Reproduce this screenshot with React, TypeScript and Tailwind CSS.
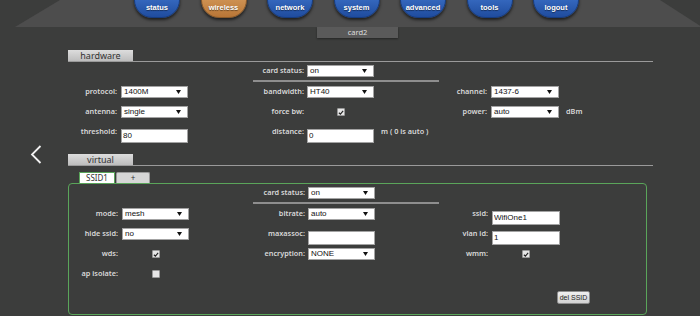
import type { ReactNode } from "react";

const navItems = ["status", "wireless", "network", "system", "advanced", "tools", "logout"];

function Caret() {
  return (
    <svg width="5" height="4" viewBox="0 0 5 4" className="shrink-0">
      <polygon points="0,0 5,0 2.5,4" fill="#111" />
    </svg>
  );
}

function Select({ value }: { value: string }) {
  return (
    <div className="flex h-[12px] w-full items-center justify-between border border-[#a3a3a3] bg-white pl-[2px] pr-[6px] font-['Liberation_Sans',sans-serif] text-[8px] leading-none text-[#111]">
      <span>{value}</span>
      <Caret />
    </div>
  );
}

function TextInput({ value = "" }: { value?: string }) {
  return (
    <input
      readOnly
      value={value}
      className="h-[14px] w-full border border-[#a3a3a3] bg-white px-[1px] font-['Liberation_Sans',sans-serif] text-[8px] leading-none text-[#111] outline-none"
    />
  );
}

function Check({ checked = false }: { checked?: boolean }) {
  return (
    <div className="mx-auto flex h-[8px] w-[8px] items-center justify-center rounded-[1px] border border-[#9a9a9a] bg-[#e6e6e6]">
      {checked && (
        <svg width="7" height="7" viewBox="0 0 7 7">
          <path d="M1 3.8 L2.8 5.5 L6 1.5" fill="none" stroke="#222" strokeWidth="1.3" />
        </svg>
      )}
    </div>
  );
}

function Label({ className, children }: { className: string; children: ReactNode }) {
  return (
    <span className={`${className} shrink-0 text-right text-[7.3px] font-semibold leading-none text-[#d8d8d8]`}>
      {children}
    </span>
  );
}

// column 1: 120px, column 2: 186px, column 3: 185px
function Col1({ label, children }: { label?: string; children?: ReactNode }) {
  return (
    <div className="flex w-[120px] shrink-0 items-center">
      <Label className="w-[49px]">{label}</Label>
      <div className="ml-[4px] w-[67px]">{children}</div>
    </div>
  );
}

function Col2({ label, children }: { label?: string; children?: ReactNode }) {
  return (
    <div className="flex w-[186px] shrink-0 items-center">
      <Label className="w-[116px]">{label}</Label>
      <div className="ml-[3px] w-[67px]">{children}</div>
    </div>
  );
}

function Col3({ label, children }: { label?: string; children?: ReactNode }) {
  return (
    <div className="flex w-[185px] shrink-0 items-center">
      <Label className="w-[113px]">{label}</Label>
      <div className="ml-[4px] w-[68px]">{children}</div>
    </div>
  );
}

function Row({ children, className = "h-[20px]" }: { children: ReactNode; className?: string }) {
  return <div className={`flex items-center ${className}`}>{children}</div>;
}

function SectionTab({ title }: { title: string }) {
  return (
    <div className="flex border-b border-[#9a9a9a]">
      <div className="flex h-[11px] w-[65px] items-center justify-center bg-gradient-to-b from-[#dddddd] to-[#bdbdbd] text-[9px] leading-none text-[#333]">
        {title}
      </div>
    </div>
  );
}

function Divider() {
  return <div className="ml-[185px] h-[2px] w-[186px] bg-[#8e8e8e]" />;
}

export default function App() {
  return (
    <div className="relative h-[316px] w-[700px] overflow-hidden bg-[#3c3d3c] font-['Noto_Sans',sans-serif]">
      <header className="relative h-[27px]">
        <div className="absolute inset-0 bg-[#4d4d4d] [clip-path:polygon(60px_0,660px_0,702px_27px,15px_27px)]" />
        <nav className="relative flex items-start gap-[20.5px] pl-[134px]">
          {navItems.map((item) => (
            <div
              key={item}
              className={
                item === "wireless"
                  ? "-mt-[18px] flex h-[36px] w-[46px] items-end justify-center rounded-[20px] border border-[#8a5a2a] bg-gradient-to-b from-[#e2ab6c] to-[#b87636] pb-[6px] shadow-[0_2px_3px_rgba(0,0,0,0.6)]"
                  : "-mt-[18px] flex h-[36px] w-[46px] items-end justify-center rounded-[20px] border border-[#163c80] bg-gradient-to-b from-[#4a82dc] to-[#1f4c9e] pb-[6px] shadow-[0_2px_3px_rgba(0,0,0,0.6)]"
              }
            >
              <span className="font-['Liberation_Sans',sans-serif] text-[7.5px] font-bold leading-none text-white [text-shadow:0_1px_1px_rgba(0,0,0,0.5)]">
                {item}
              </span>
            </div>
          ))}
        </nav>
      </header>

      <div className="ml-[317px] flex h-[11px] w-[81px] items-center justify-center bg-[#5a5a5a] pt-[1px] text-[7.5px] leading-none text-[#dedede] shadow-[0_1px_2px_rgba(0,0,0,0.4)]">
        card2
      </div>

      <svg className="absolute left-[30px] top-[145px]" width="12" height="19" viewBox="0 0 12 19">
        <polyline points="10.5,1 2,9.5 10.5,18" fill="none" stroke="#f2f2f2" strokeWidth="1.8" />
      </svg>

      <main className="ml-[68px] mt-[12px] w-[585px]">
        <SectionTab title="hardware" />
        <Row className="h-[18px]">
          <div className="w-[120px]" />
          <Col2 label="card status:">
            <Select value="on" />
          </Col2>
        </Row>
        <Divider />
        <Row>
          <Col1 label="protocol:">
            <Select value="1400M" />
          </Col1>
          <Col2 label="bandwidth:">
            <Select value="HT40" />
          </Col2>
          <Col3 label="channel:">
            <Select value="1437-6" />
          </Col3>
        </Row>
        <Row>
          <Col1 label="antenna:">
            <Select value="single" />
          </Col1>
          <Col2 label="force bw:">
            <Check checked />
          </Col2>
          <Col3 label="power:">
            <Select value="auto" />
          </Col3>
          <span className="ml-[7px] text-[7.3px] font-semibold leading-none text-[#d8d8d8]">dBm</span>
        </Row>
        <Row>
          <Col1 label="threshold:">
            <TextInput value="80" />
          </Col1>
          <Col2 label="distance:">
            <TextInput value="0" />
          </Col2>
          <span className="ml-[7px] text-[7.3px] font-semibold leading-none text-[#d8d8d8]">m ( 0 is auto )</span>
        </Row>

        <div className="mt-[12px]">
          <SectionTab title="virtual" />
        </div>
        <div className="ml-[11px] mt-[6px] flex items-end">
          <div className="flex h-[11px] w-[36px] items-center justify-center border-x border-t border-[#5aa55a] bg-white text-[8px] leading-none text-[#333]">
            SSID1
          </div>
          <div className="ml-[1px] flex h-[11px] w-[34px] items-center justify-center rounded-t-[2px] border-x border-t border-[#9a9a9a] bg-[#d6d6d6] text-[8px] leading-none text-[#333]">
            +
          </div>
        </div>
        <section className="h-[132px] w-[579px] rounded-[4px] border border-[#5aa55a]">
          <Row className="h-[18px]">
            <div className="w-[120px]" />
            <Col2 label="card status:">
              <Select value="on" />
            </Col2>
          </Row>
          <div className="-ml-px">
            <Divider />
          </div>
          <Row>
            <Col1 label="mode:">
              <Select value="mesh" />
            </Col1>
            <Col2 label="bitrate:">
              <Select value="auto" />
            </Col2>
            <Col3 label="ssid:">
              <TextInput value="WifiOne1" />
            </Col3>
          </Row>
          <Row>
            <Col1 label="hide ssid:">
              <Select value="no" />
            </Col1>
            <Col2 label="maxassoc:">
              <TextInput />
            </Col2>
            <Col3 label="vlan id:">
              <TextInput value="1" />
            </Col3>
          </Row>
          <Row>
            <Col1 label="wds:">
              <Check checked />
            </Col1>
            <Col2 label="encryption:">
              <Select value="NONE" />
            </Col2>
            <Col3 label="wmm:">
              <Check checked />
            </Col3>
          </Row>
          <Row>
            <Col1 label="ap isolate:">
              <Check />
            </Col1>
          </Row>
          <div className="ml-[488px] mt-[7px] flex h-[13px] w-[33px] items-center justify-center whitespace-nowrap rounded-[2px] border border-[#8e8e8e] bg-gradient-to-b from-[#f0f0f0] to-[#d2d2d2] font-['Liberation_Sans',sans-serif] text-[7px] leading-none text-[#222]">
            del SSID
          </div>
        </section>
      </main>
    </div>
  );
}
